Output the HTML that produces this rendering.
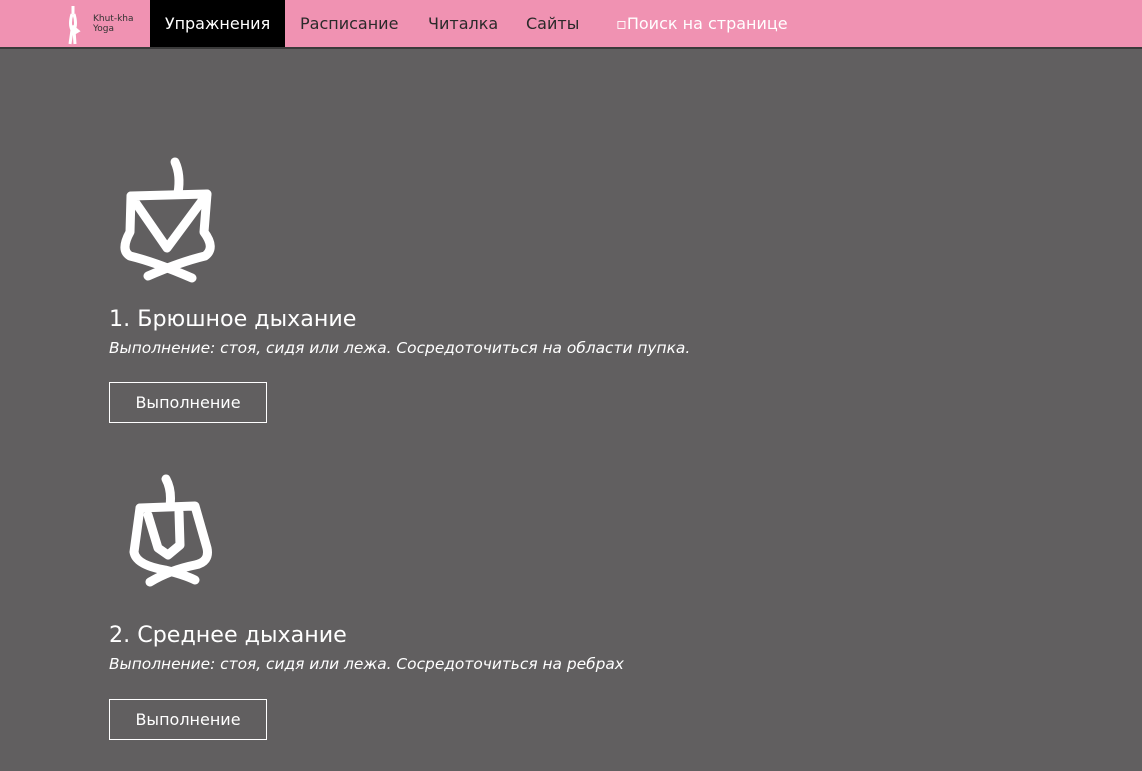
<!DOCTYPE html><html><head><style>
body{margin:0;background:#615f60;font-family:"DejaVu Sans","Liberation Sans",sans-serif;width:1142px;height:771px;overflow:hidden;position:relative}
.nav{position:absolute;left:0;top:0;width:1142px;height:47px;background:#f092b2;border-bottom:2px solid #3a3a3a}
.nav a{position:absolute;top:0;height:47px;line-height:47px;font-size:16px;color:#2a2a2a}
.act{background:#000;color:#fff!important;left:150px;width:135px;text-align:center}
h2{position:absolute;left:109px;margin:0;font-weight:normal;color:#fff;font-size:22.2px}
p{position:absolute;left:109px;margin:0;color:#fff;font-style:italic;font-size:15.4px}
.b{position:absolute;left:109px;width:156px;height:39px;border:1px solid #fff;color:#fff;font-size:16px;text-align:center;line-height:39px}
svg{position:absolute}
</style></head><body>
<div class="nav">
<svg style="left:64px;top:4px" width="20" height="42"><path d="M9 2 L9 10 M8 10 Q5 20 8 26 L6 40 M10 10 Q13 20 10 26 L11 40 M8 22 L14 27 L9 30" stroke="#fff" stroke-width="3" fill="none"/></svg>
<div style="position:absolute;left:93px;top:14px;font-size:9px;line-height:10px;color:#333">Khut-kha<br>Yoga</div>
<a class="act">Упражнения</a>
<a style="left:300px">Расписание</a>
<a style="left:428px">Читалка</a>
<a style="left:526px">Сайты</a>
<a style="left:616px;color:#fff">▫Поиск на странице</a>
</div>
<svg style="left:0;top:0" width="300" height="771"><g stroke="#fff" stroke-width="9" fill="none" stroke-linecap="round" stroke-linejoin="round">
<path d="M175 162 Q181 175 178 193"/>
<path d="M131 196 L207 194 L167 248 Z"/>
<path d="M131 196 L130 232 Q120 250 130 256 Q155 262 192 278"/>
<path d="M207 194 L204 232 Q216 248 205 256 Q180 262 148 276"/>
<path d="M166 479 Q172 490 170 506"/>
<path d="M140 508 L195 506 L207 548 Q210 562 195 565 Q170 570 150 582"/>
<path d="M140 508 L134 552 Q136 565 165 570 Q185 575 195 580"/>
<path d="M148 515 L158 548 L168 555 L180 545 L179 512"/>
</g></svg>
<h2 style="top:306px">1. Брюшное дыхание</h2>
<p style="top:339px">Выполнение: стоя, сидя или лежа. Сосредоточиться на области пупка.</p>
<div class="b" style="top:382px">Выполнение</div>
<h2 style="top:622px">2. Среднее дыхание</h2>
<p style="top:655px">Выполнение: стоя, сидя или лежа. Сосредоточиться на ребрах</p>
<div class="b" style="top:699px">Выполнение</div>
</body></html>
